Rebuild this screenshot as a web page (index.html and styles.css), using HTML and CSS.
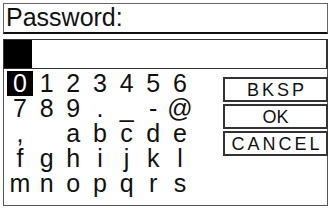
FILE: index.html
```html
<!DOCTYPE html>
<html lang="en">

<head>
    <meta charset="utf-8">
    <meta name="viewport" content="width=device-width, initial-scale=1.0">
    <title>Password</title>
    <link rel="stylesheet" href="styles.css">
</head>

<body>
    <div class="screen">
        <div class="title">Password:</div>
        <div class="entry">
            <span class="cursor"></span>
        </div>
        <section class="panel">
            <div class="chars">
                <span class="valgt">0</span><span>1</span><span>2</span><span>3</span><span>4</span><span>5</span><span>6</span>
                <span>7</span><span>8</span><span>9</span><span>.</span><span>_</span><span>-</span><span>@</span>
                <span>,</span><span>&nbsp;</span><span>a</span><span>b</span><span>c</span><span>d</span><span>e</span>
                <span>f</span><span>g</span><span>h</span><span>i</span><span>j</span><span>k</span><span>l</span>
                <span>m</span><span>n</span><span>o</span><span>p</span><span>q</span><span>r</span><span>s</span>
            </div>
            <nav class="keys">
                <div class="key">BKSP</div>
                <div class="key ok">OK</div>
                <div class="key">CANCEL</div>
            </nav>
        </section>
    </div>
</body>

</html>
```

FILE: styles.css
```css
body {
    margin: 0;
    background: #fff;
    font-family: "Liberation Sans", Arial, sans-serif;
    color: #111;
}

.screen {
    width: 325px;
    padding: 3px 0 0 3px;
}

.title {
    height: 28px;
    border: 1px solid #666;
    border-bottom: 2px solid #111;
    font-size: 25px;
    line-height: 27px;
    padding-left: 2px;
}

.entry {
    margin-top: 5px;
    height: 28px;
    border: 1px solid #333;
    border-right-width: 2px;
    display: flex;
}

.cursor {
    width: 28px;
    background: #000;
}

.panel {
    display: flex;
    height: 136px;
    border: 1px solid #555;
    border-top: none;
}

.chars {
    display: grid;
    grid-template-columns: repeat(7, 26.67px);
    grid-auto-rows: 25px;
    margin: 2px 0 0 2.67px;
    font-size: 25px;
    line-height: 25px;
    text-align: center;
}

.chars .valgt {
    background: #000;
    color: #fff;
}

.keys {
    margin: 8px -1px 0 auto;
    width: 105px;
    display: flex;
    flex-direction: column;
    gap: 2px;
}

.key {
    box-sizing: border-box;
    height: 25px;
    border: 2px solid #333;
    font-size: 18px;
    line-height: 23px;
    letter-spacing: 3px;
    padding-left: 3px;
    text-align: center;
}

.key.ok {
    letter-spacing: 0;
    padding-left: 0;
}
```
